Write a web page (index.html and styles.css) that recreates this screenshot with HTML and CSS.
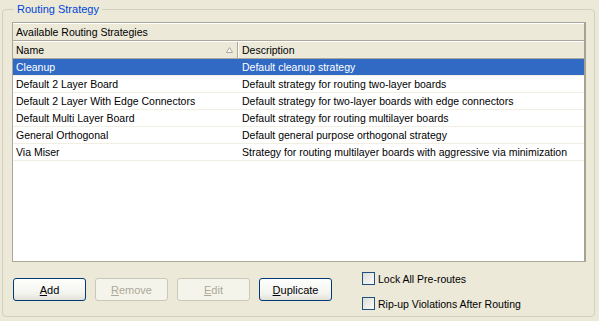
FILE: index.html
```html
<!DOCTYPE html>
<html lang="en">
<head>
    <meta charset="UTF-8">
    <title>Routing Strategy</title>
    <link rel="stylesheet" href="styles.css">
</head>
<body>
<div class="group">
    <span class="legend">Routing Strategy</span>
    <div class="list">
        <div class="caption">Available Routing Strategies</div>
        <div class="head">
            <div class="col name">Name
                <svg class="sort" width="7" height="6" viewBox="0 0 7 6">
                    <path d="M3.5 0.5 L6.5 5.5 L0.5 5.5 Z" fill="#fff" stroke="#aca899" stroke-width="1"/>
                </svg>
            </div>
            <div class="col desc">Description</div>
        </div>
        <ul class="rows">
            <li class="current"><span class="name">Cleanup</span><span class="desc">Default cleanup strategy</span></li>
            <li><span class="name">Default 2 Layer Board</span><span class="desc">Default strategy for routing two-layer boards</span></li>
            <li><span class="name">Default 2 Layer With Edge Connectors</span><span class="desc">Default strategy for two-layer boards with edge connectors</span></li>
            <li><span class="name">Default Multi Layer Board</span><span class="desc">Default strategy for routing multilayer boards</span></li>
            <li><span class="name">General Orthogonal</span><span class="desc">Default general purpose orthogonal strategy</span></li>
            <li><span class="name">Via Miser</span><span class="desc">Strategy for routing multilayer boards with aggressive via minimization</span></li>
        </ul>
    </div>
    <div class="bottom">
        <div class="buttons">
            <button class="btn"><u>A</u>dd</button>
            <button class="btn" disabled><u>R</u>emove</button>
            <button class="btn" disabled><u>E</u>dit</button>
            <button class="btn"><u>D</u>uplicate</button>
        </div>
        <div class="checks">
            <label class="check"><span class="box"></span>Lock All Pre-routes</label>
            <label class="check"><span class="box"></span>Rip-up Violations After Routing</label>
        </div>
    </div>
</div>
</body>
</html>
```

FILE: styles.css
```css
* {
    padding: 0;
    margin: 0;
    list-style: none;
    box-sizing: border-box;
}

body {
    background: #ece9d8;
    font-family: "Liberation Sans", Arial, sans-serif;
    font-size: 10.5px;
    color: #000;
}

.group {
    position: relative;
    width: 593px;
    height: 308px;
    margin: 9px 0 0 2px;
    padding: 12px 8px 0 9px;
    border: 1px solid #d0d0bf;
    border-radius: 4px;
}

.legend {
    position: absolute;
    left: 11px;
    top: -8px;
    padding: 0 3px;
    background: #ece9d8;
    color: #0046d5;
    font-size: 11px;
    line-height: 14px;
}

.list {
    width: 574px;
    height: 240px;
    background: #fff;
    border: 1px solid #aca899;
    border-right-width: 2px;
    border-right-color: #a5a294;
}

.caption {
    height: 18px;
    line-height: 16px;
    padding-left: 3px;
    background: #ece9d8;
    border-top: 1px solid #fff;
    border-bottom: 1px solid #aca899;
}

.head {
    display: flex;
    height: 18px;
    background: #ece9d8;
    border-top: 1px solid #fff;
    border-bottom: 1px solid #aca899;
}

.head .col {
    line-height: 16px;
    padding-left: 3px;
}

.head .name {
    position: relative;
    width: 225px;
    border-right: 1px solid #aca899;
    box-shadow: 1px 0 0 #fff;
}

.sort {
    position: absolute;
    right: 4px;
    top: 5px;
}

.head .desc {
    flex: 1;
    padding-left: 4px;
}

.rows li {
    display: flex;
    height: 17px;
    line-height: 16px;
    border-bottom: 1px solid #f1efe2;
}

.rows li span {
    padding-left: 3px;
}

.rows .name {
    width: 226px;
}

.rows .desc {
    flex: 1;
}

.rows li.current {
    background: #316ac5;
    color: #fff;
}

.bottom {
    display: flex;
}

.buttons {
    display: flex;
    gap: 9px;
    margin: 16px 0 0 1px;
}

.btn {
    width: 73px;
    height: 23px;
    font-family: inherit;
    font-size: 11px;
    color: #000;
    border: 1px solid #003c74;
    border-radius: 3px;
    background: linear-gradient(#fefefd, #f3f3ee 70%, #e2e0d6);
}

.btn[disabled] {
    color: #aca899;
    border-color: #cac8bb;
    background: #f5f4ea;
}

.checks {
    display: flex;
    flex-direction: column;
    gap: 12px;
    margin: 10px 0 0 30px;
}

.check {
    display: flex;
    align-items: center;
    gap: 3px;
    height: 13px;
}

.box {
    width: 13px;
    height: 13px;
    border: 1px solid #1c5180;
    background: linear-gradient(135deg, #dcdcd6, #fbfbf9);
}
```
